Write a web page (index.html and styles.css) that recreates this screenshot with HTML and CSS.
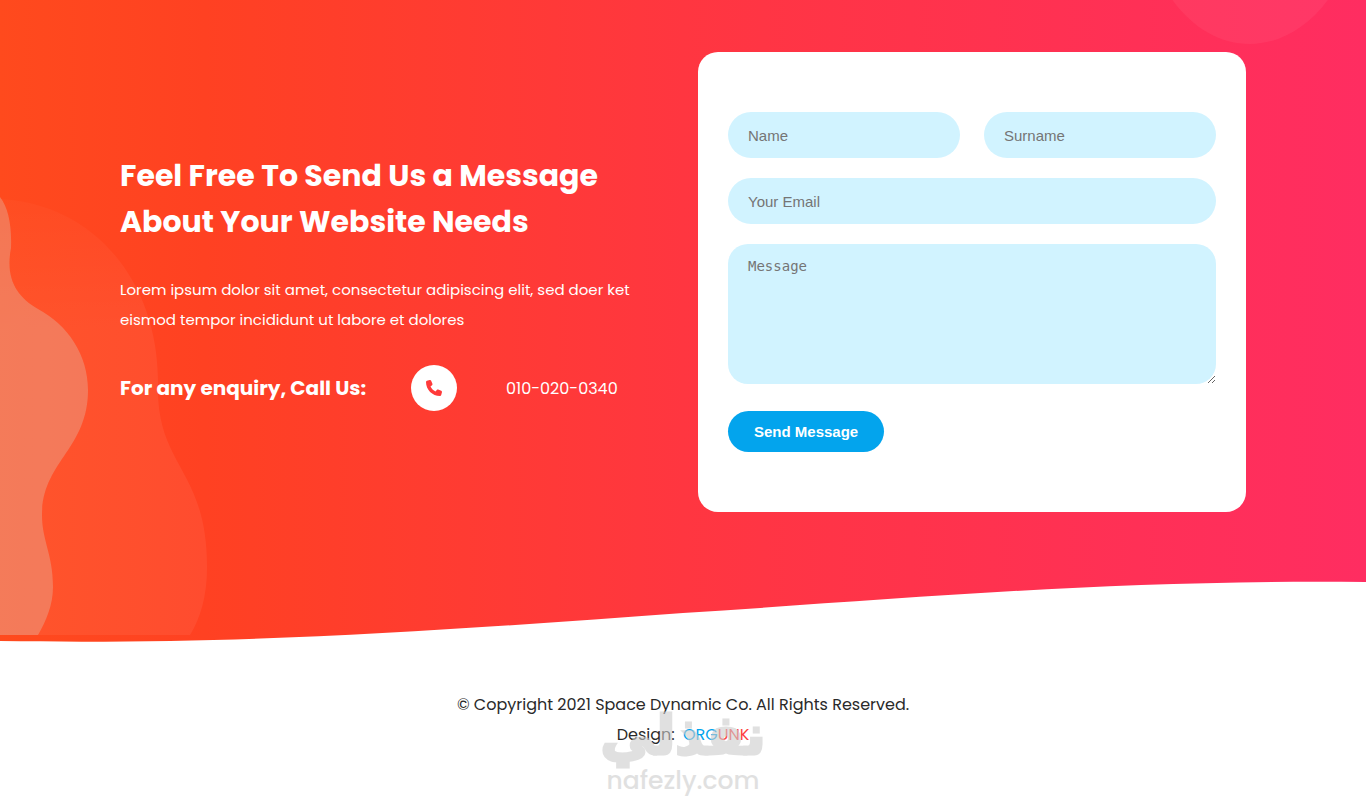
FILE: index.html
```html
<!DOCTYPE html>
<html lang="en">
<head>
<meta charset="utf-8">
<meta name="viewport" content="width=device-width, initial-scale=1">
<title>Space Dynamic - Contact</title>
<link rel="stylesheet" href="styles.css">
</head>
<body>
<section class="contact">
  <svg class="contact-bg" viewBox="0 0 1366 642" preserveAspectRatio="none" aria-hidden="true">
    <defs>
      <linearGradient id="warm" x1="0" y1="0" x2="1" y2="0">
        <stop offset="0" stop-color="#ff4a1d"/>
        <stop offset="0.15" stop-color="#ff4122"/>
        <stop offset="0.5" stop-color="#ff3640"/>
        <stop offset="1" stop-color="#ff2d61"/>
      </linearGradient>
    </defs>
    <path fill="url(#warm)" d="M0 0H1366V582C1110 579 890 600 683 613C450 630 250 645 0 641Z"/>
  </svg>
  <svg class="contact-waves" viewBox="0 0 208 438" aria-hidden="true">
    <defs>
      <linearGradient id="haze" x1="0" y1="0" x2="0" y2="1">
        <stop offset="0" stop-color="#fff" stop-opacity="0.02"/>
        <stop offset="0.3" stop-color="#fff" stop-opacity="0.06"/>
        <stop offset="1" stop-color="#fff" stop-opacity="0.06"/>
      </linearGradient>
    </defs>
    <path fill="url(#haze)" d="M0 2C95 7 158 85 158 185C155 270 207 270 207 370C207 400 200 422 190 438H0Z"/>
    <path fill="#e0c2b1" fill-opacity=".35" d="M0 0C8 10 12 28 11 51C5 82 17 100 38 112C68 128 88 158 88 193C88 252 42 265 42 318C42 344 53 357 53 390C53 408 46 424 38 438H0Z"/>
  </svg>
  <svg class="contact-bubble" viewBox="0 0 180 44" aria-hidden="true">
    <path fill="#fff" fill-opacity=".05" d="M0 -20C22 22 55 44 90 44C125 44 160 20 180 -20Z"/>
  </svg>
  <div class="container">
    <div class="intro">
      <h2>Feel Free To Send Us a Message About Your Website Needs</h2>
      <p>Lorem ipsum dolor sit amet, consectetur adipiscing elit, sed doer ket eismod tempor incididunt ut labore et dolores</p>
      <div class="phone">
        <h4>For any enquiry, Call Us:</h4>
        <span class="phone-icon">
          <svg viewBox="0 0 512 512" aria-hidden="true"><path d="M164.900 24.600c-7.700-18.600-28-28.500-47.400-23.200l-88 24C12.100 30.200 0 46 0 64c0 247.400 200.600 448 448 448 18 0 33.800-12.100 38.600-29.500l24-88c5.300-19.400-4.600-39.700-23.200-47.400l-96-40c-16.300-6.800-35.200-2.100-46.300 11.600L304.700 368C234.300 334.700 177.300 277.700 144 207.300L193.300 167c13.700-11.200 18.400-30 11.600-46.300z"/></svg>
        </span>
        <a href="tel:0100200340">010-020-0340</a>
      </div>
    </div>
    <form class="card">
      <div class="row">
        <input type="text" placeholder="Name" aria-label="Name">
        <input type="text" placeholder="Surname" aria-label="Surname">
      </div>
      <input type="email" placeholder="Your Email" aria-label="Your Email">
      <textarea placeholder="Message" aria-label="Message"></textarea>
      <button type="button">Send Message</button>
    </form>
  </div>
</section>
<footer>
  <p>© Copyright 2021 Space Dynamic Co. All Rights Reserved.</p>
  <div class="credit">
    <p>Design: <a href="#"><span class="blue">ORG</span><span class="red">UNK</span></a></p>
    <div class="watermark">
      <span class="mark-ar" lang="ar" dir="rtl">نفذلي</span>
      <span class="mark-en">nafezly.com</span>
    </div>
  </div>
</footer>
</body>
</html>
```
FILE: styles.css
```css
* { box-sizing: border-box; margin: 0; padding: 0; }
body {
  font-family: Poppins, Inter, sans-serif;
  background: #fff;
  color: #2a2a2a;
  overflow-x: hidden;
}
.contact { position: relative; padding: 52px 0 130px; }
.contact-bg { position: absolute; inset: 0; width: 100%; height: 100%; }
.contact-waves { position: absolute; left: 0; bottom: 7px; width: 208px; }
.contact-bubble { position: absolute; right: 26px; top: 0; width: 180px; }
.container {
  position: relative;
  max-width: 1126px;
  margin: 0 auto;
  display: grid;
  grid-template-columns: 1fr 548px;
  gap: 60px;
  align-items: center;
}
.intro { color: #fff; }
h2 { font-size: 30px; line-height: 46px; font-weight: 700; }
.intro p { font-size: 15px; line-height: 30px; margin: 30px 0; }
.phone { display: flex; align-items: center; }
h4 { font-size: 20px; line-height: 30px; font-weight: 700; flex: 0 0 291px; }
.phone-icon {
  width: 46px; height: 46px; border-radius: 50%;
  background: #fff;
  display: flex; align-items: center; justify-content: center;
  margin-right: 49px;
}
.phone-icon svg { width: 16px; height: 16px; fill: #ff3a3a; }
.phone a { color: #fff; font-size: 16px; text-decoration: none; white-space: nowrap; }
.card {
  background: #fff;
  border-radius: 20px;
  padding: 60px 30px;
  display: flex;
  flex-direction: column;
  gap: 20px;
}
.row { display: grid; grid-template-columns: 1fr 1fr; gap: 24px; }
input, textarea {
  width: 100%;
  border: 0;
  background: #d1f3ff;
  color: #2a2a2a;
  font-size: 15px;
  padding: 0 20px;
  outline: none;
}
input { height: 46px; border-radius: 23px; font-family: "Liberation Sans", Arial, sans-serif; }
textarea {
  display: block;
  height: 140px;
  border-radius: 20px;
  padding-top: 14px;
  font-family: "DejaVu Sans Mono", monospace;
  font-size: 14px;
  resize: both;
}
::placeholder { color: #757575; opacity: 1; }
button {
  align-self: flex-start;
  margin-top: 7px;
  height: 41px;
  padding: 0 26px;
  border: 0;
  border-radius: 21px;
  background: #03a4ed;
  color: #fff;
  font-family: "Liberation Sans", Arial, sans-serif;
  font-size: 15px;
  font-weight: 700;
  cursor: pointer;
}
footer { padding: 48px 0 47px; text-align: center; font-size: 16px; line-height: 30px; }
.credit { position: relative; }
.credit a { text-decoration: none; margin-left: 4px; }
.blue { color: #03a4ed; }
.red { color: #fe3f40; }
.watermark {
  position: absolute;
  left: 50%;
  top: -14px;
  transform: translateX(-50%);
  color: #cdcdcd;
  opacity: .6;
  pointer-events: none;
  display: flex;
  flex-direction: column;
  align-items: center;
}
.mark-ar { font-family: "DejaVu Sans", sans-serif; font-weight: 700; font-size: 54px; line-height: 60px; height: 60px; -webkit-text-stroke: 3px #cdcdcd; }
.mark-en { font-size: 25px; line-height: 30px; font-weight: 500; }
```
